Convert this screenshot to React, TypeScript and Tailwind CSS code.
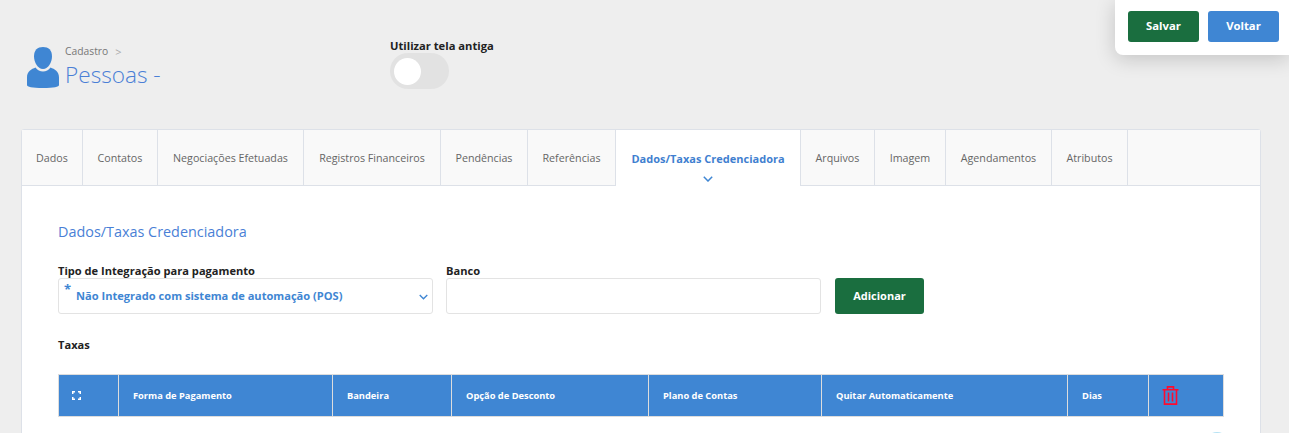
const font = { fontFamily: '"Open Sans", "Noto Sans", sans-serif' };

const tabs = [
  { label: "Dados", width: "w-[61px]" },
  { label: "Contatos", width: "w-[75px]" },
  { label: "Negociações Efetuadas", width: "w-[146px]" },
  { label: "Registros Financeiros", width: "w-[137px]" },
  { label: "Pendências", width: "w-[87px]" },
  { label: "Referências", width: "w-[88px]" },
  { label: "Dados/Taxas Credenciadora", width: "w-[185px]", active: true },
  { label: "Arquivos", width: "w-[74px]" },
  { label: "Imagem", width: "w-[71px]" },
  { label: "Agendamentos", width: "w-[106px]" },
  { label: "Atributos", width: "w-[76px]" },
];

const columns = [
  { label: "Forma de Pagamento", width: "w-[214px]" },
  { label: "Bandeira", width: "w-[119px]" },
  { label: "Opção de Desconto", width: "w-[197px]" },
  { label: "Plano de Contas", width: "w-[173px]" },
  { label: "Quitar Automaticamente", width: "w-[246px]" },
  { label: "Dias", width: "w-[81px]" },
];

function UserIcon() {
  return (
    <svg width="32" height="41" viewBox="0 0 32 41" className="shrink-0 text-[#3f86d3]" fill="currentColor">
      <path d="M16 0c5.500 0 9 3 9 9.500 0 5.500-3.500 12.500-9 12.500S7 15 7 9.500C7 3 10.500 0 16 0z" />
      <path d="M8.500 20.500c1.800 2.800 4.500 4 7.500 4s5.700-1.200 7.500-4c4 1.700 8.500 3.500 8.500 10v7.500c0 1.800-5 3-16 3S0 39.800 0 38v-7.500c0-6.500 4.500-8.300 8.500-10z" />
    </svg>
  );
}

function TrashIcon() {
  return (
    <svg width="17" height="19" viewBox="0 0 17 19" fill="none" stroke="#ff0a2e" strokeWidth="1.600">
      <path d="M.5 3.800h16M5.500 3.500V.9h6v2.600M2.500 3.800v14.300h12V3.800M6.500 6.500v9M10.500 6.500v9" />
    </svg>
  );
}

function ExpandIcon() {
  return (
    <svg width="9" height="9" viewBox="0 0 9 9" fill="none" stroke="#ffffff" strokeWidth="1.500">
      <path d="M.75 3V.75H3M6 .75h2.250V3M8.250 6v2.250H6M3 8.250H.75V6" />
    </svg>
  );
}

function Chevron({ className }: { className: string }) {
  return (
    <svg viewBox="0 0 10 6" fill="none" stroke="#3f86d3" strokeWidth="1.500" className={className}>
      <path d="M.8.8 5 5l4.200-4.200" />
    </svg>
  );
}

export default function App() {
  return (
    <div className="relative h-[433px] w-[1289px] overflow-hidden bg-[#eeeeee]" style={font}>
      {/* floating action bar */}
      <div className="absolute right-0 top-0 z-10 flex h-[55px] w-[174px] gap-[9px] rounded-bl-lg bg-white pl-[13px] pt-[11px] shadow-[0_4px_20px_rgba(0,0,0,0.18)]">
        <button className="h-[31px] w-[71px] rounded-[3px] bg-[#1a6e3f] text-[11.3px] font-bold text-white">Salvar</button>
        <button className="h-[31px] w-[71px] rounded-[3px] bg-[#3f86d3] text-[11.3px] font-bold text-white">Voltar</button>
      </div>

      {/* page header */}
      <div className="flex h-[129px] pl-[27px] pt-[38px]">
        <div className="flex w-[363px] gap-[6px] pt-[9px]">
          <UserIcon />
          <div className="-mt-[3px]">
            <div className="flex items-center gap-[7px] text-[10.300px] leading-[15px] text-[#777777]">
              Cadastro
              <span className="text-[11px] text-[#aaaaaa]">&gt;</span>
            </div>
            <div className="text-[22.600px] font-light leading-[31px] text-[#4a7fd6]">Pessoas -</div>
          </div>
        </div>
        <div>
          <div className="text-[11.200px] font-bold leading-[15px] text-[#222222]">Utilizar tela antiga</div>
          <div className="flex h-[36px] w-[59px] items-center rounded-full bg-[#e2e2e2] pl-[4px]">
            <div className="h-[27px] w-[27px] rounded-full bg-white" />
          </div>
        </div>
      </div>

      {/* card */}
      <div className="ml-[21px] h-[320px] w-[1240px] rounded-t-[3px] border border-[#dde1e8] bg-white">
        <div className="flex h-[56px] border-b border-[#dde1e8] bg-[#f9f9f9]">
          {tabs.map((tab) => (
            <div
              key={tab.label}
              className={`relative flex shrink-0 items-center justify-center border-r border-[#dde1e8] pt-[2px] ${tab.width} ${
                tab.active
                  ? "-mt-[1px] h-[57px] border-t bg-white text-[11px] font-bold text-[#3f7fd0]"
                  : "h-[55px] text-[10.700px] text-[#666666]"
              }`}
            >
              {tab.label}
              {tab.active && <Chevron className="absolute bottom-[4px] left-[87px] h-[6px] w-[10px]" />}
            </div>
          ))}
        </div>

        <div className="px-[36px] pt-[36px]">
          <h2 className="text-[14.400px] font-normal leading-[19px] text-[#4a7fd6]">Dados/Taxas Credenciadora</h2>

          <div className="mt-[22px] flex items-end">
            <div className="w-[375px]">
              <div className="text-[11.100px] font-bold leading-[15px] text-[#222222]">Tipo de Integração para pagamento</div>
              <div className="relative flex h-[36px] items-center rounded-[3px] border border-[#e3e3e3] pl-[17px] pt-[1px] text-[11.100px] font-bold text-[#3f86d3]">
                <span className="absolute left-[5px] top-[3px] text-[13px] font-bold leading-[15px]">*</span>
                Não Integrado com sistema de automação (POS)
                <Chevron className="absolute right-[4px] top-[15px] h-[6px] w-[9px]" />
              </div>
            </div>
            <div className="ml-[13px] w-[375px]">
              <div className="text-[11.100px] font-bold leading-[15px] text-[#222222]">Banco</div>
              <div className="h-[36px] rounded-[3px] border border-[#e3e3e3]" />
            </div>
            <button className="ml-[14px] h-[36px] w-[89px] rounded-[3px] bg-[#1a6e3f] text-[11px] font-bold text-white">Adicionar</button>
          </div>

          <div className="mt-[23px] text-[11.100px] font-bold leading-[15px] text-[#222222]">Taxas</div>

          <div className="mt-[22px] flex h-[43px] w-[1166px] border border-[#dddddd] bg-[#3f86d3] text-[9.300px] font-bold text-white">
            <div className="flex w-[60px] shrink-0 items-center border-r border-[#dddddd] pl-[13px]">
              <ExpandIcon />
            </div>
            {columns.map((col) => (
              <div key={col.label} className={`flex shrink-0 items-center border-r border-[#dddddd] pl-[14px] ${col.width}`}>
                {col.label}
              </div>
            ))}
            <div className="flex flex-1 items-center pl-[13px]">
              <TrashIcon />
            </div>
          </div>
        </div>
      </div>

      <div className="absolute left-[1205px] top-[432px] h-[24px] w-[24px] rounded-full bg-[#b5e2f4]" />
    </div>
  );
}
